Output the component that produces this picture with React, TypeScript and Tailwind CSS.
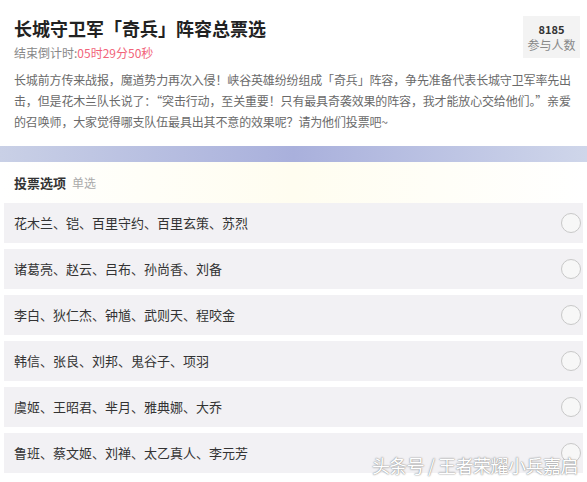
import React from "react";

const options = [
  "花木兰、铠、百里守约、百里玄策、苏烈",
  "诸葛亮、赵云、吕布、孙尚香、刘备",
  "李白、狄仁杰、钟馗、武则天、程咬金",
  "韩信、张良、刘邦、鬼谷子、项羽",
  "虞姬、王昭君、芈月、雅典娜、大乔",
  "鲁班、蔡文姬、刘禅、太乙真人、李元芳",
];

const intro = [
  "长城前方传来战报，魔道势力再次入侵！峡谷英雄纷纷组成「奇兵」阵容，争先准备代表长城守卫军率先出",
  "击，但是花木兰队长说了：“突击行动，至关重要！只有最具奇袭效果的阵容，我才能放心交给他们。”亲爱",
  "的召唤师，大家觉得哪支队伍最具出其不意的效果呢？请为他们投票吧~",
];

export default function App() {
  return (
    <div
      className="relative h-[482px] w-[587px] overflow-hidden bg-white text-[#333]"
      style={{ fontFamily: '"Noto Sans CJK SC", "Liberation Sans", sans-serif' }}
    >
      <header className="flex items-start justify-between pl-[14px] pr-[7px] pt-[14px]">
        <div>
          <h1 className="text-[18px] font-bold leading-[28px] text-[#222]">长城守卫军「奇兵」阵容总票选</h1>
          <p className="mt-[3px] text-[12px] leading-[16px] text-[#888]">
            结束倒计时:<span className="text-[#f2647a]">05时29分50秒</span>
          </p>
        </div>
        <div className="mt-[2px] flex h-[42px] w-[57px] flex-col items-center justify-center gap-[1px] bg-[#f3f3f3]">
          <span className="text-[11px] font-bold leading-[13px] text-[#333]">8185</span>
          <span className="text-[12px] leading-[15px] text-[#888]">参与人数</span>
        </div>
      </header>

      <div className="mt-[8px] flex flex-col pl-[14px] text-[12px] leading-[21px] text-[#6a6a6a]">
        {intro.map((line) => (
          <p key={line} className="whitespace-nowrap tracking-[-0.15px]">
            {line}
          </p>
        ))}
      </div>

      <div className="mt-[14px] h-[16px] bg-gradient-to-r from-[#c9d0e6] via-[#a9b0dc] to-[#cfd6ea]" />

      <div className="flex items-center gap-[6px] bg-gradient-to-r from-white via-[#fffdf0] to-white px-[14px] pb-[11px] pt-[12px]">
        <span className="text-[13px] font-bold leading-[18px] text-[#333]">投票选项</span>
        <span className="text-[12px] leading-[18px] text-[#aaa]">单选</span>
      </div>

      <ul className="flex flex-col gap-[6px] px-[4px]">
        {options.map((o) => (
          <li key={o} className="flex h-[40px] items-center justify-between bg-[#f2f1f4] pl-[10px] pr-[2px]">
            <span className="text-[13px] text-[#333]">{o}</span>
            <span className="h-[20px] w-[20px] rounded-full border border-[#c8c8c8] bg-[#f7f7f7]" />
          </li>
        ))}
      </ul>

      <div
        className="absolute bottom-[6px] right-[9px] text-[18px] leading-[22px] tracking-[-0.5px] text-white"
        style={{ textShadow: "0 0 2px #999, 0 0 1px #777" }}
      >
        头条号 / 王者荣耀小兵嘉启
      </div>
    </div>
  );
}
